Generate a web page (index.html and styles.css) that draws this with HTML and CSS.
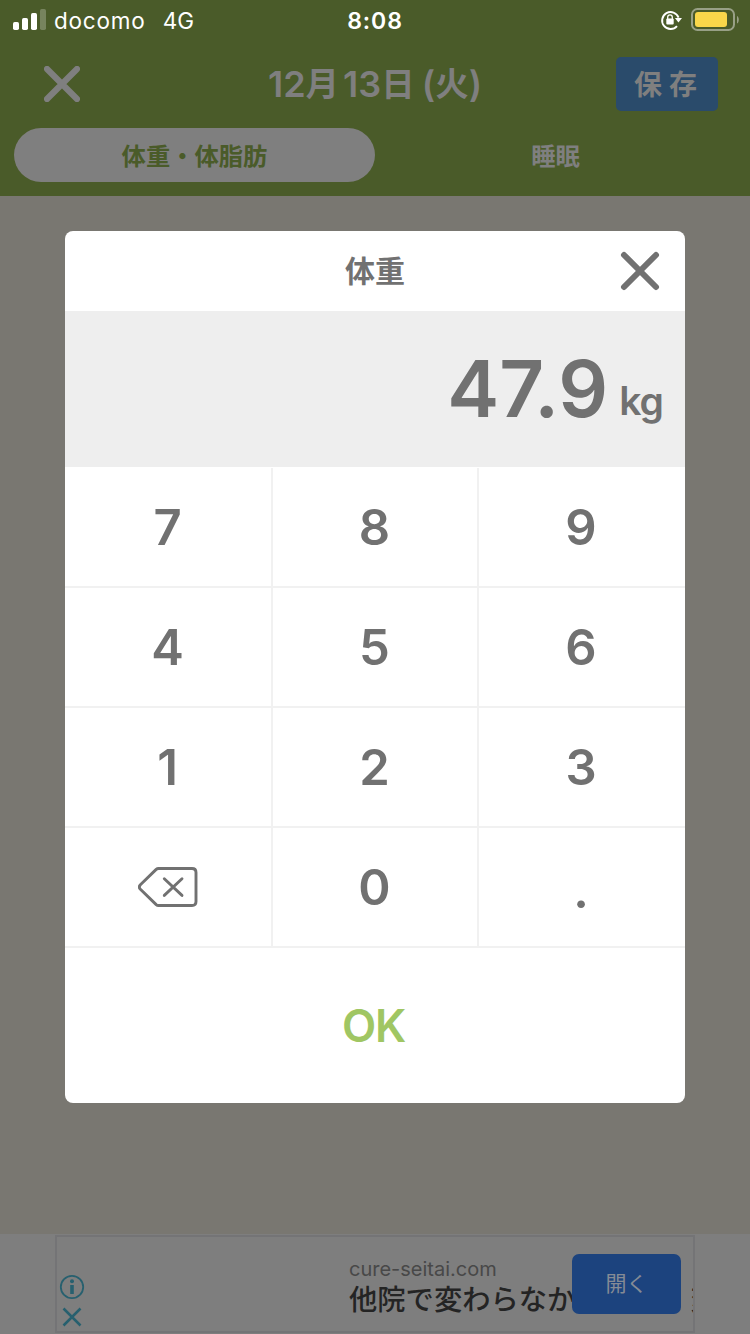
FILE: index.html
```html
<!DOCTYPE html>
<html lang="ja">
<head>
<meta charset="utf-8">
<title>体重</title>
<link rel="stylesheet" href="styles.css">
</head>
<body>
<div class="screen">
  <header class="header">
    <div class="status">
      <div class="status-left">
        <svg class="signal" width="34" height="22" viewBox="0 0 34 22"><g fill="#fff"><rect x="0" y="13" width="6" height="8" rx="1.7"/><rect x="9" y="9" width="6" height="12" rx="1.7"/><rect x="18" y="4" width="6" height="17" rx="1.7"/><rect x="27" y="0" width="6" height="21" rx="1.7" opacity=".25"/></g></svg>
        <span class="carrier">docomo</span>
        <span class="network">4G</span>
      </div>
      <div class="clock">8:08</div>
      <div class="status-right">
        <svg width="22" height="22" viewBox="0 0 22 22"><path d="M17 17.200A8.500 8.500 0 1 1 18.600 8.600" fill="none" stroke="#fff" stroke-width="1.900"/><path d="M14.900 9H22L18.450 13.500Z" fill="#fff"/><rect x="6.300" y="9.600" width="7.400" height="6" rx="1" fill="#fff"/><path d="M7.700 10V8.200a2.300 2.300 0 0 1 4.600 0V10" fill="none" stroke="#fff" stroke-width="1.300"/></svg>
        <svg width="49" height="24" viewBox="0 0 49 24"><rect x="1" y="1" width="42" height="21" rx="5.5" fill="none" stroke="#98a086" stroke-width="2"/><rect x="4" y="4" width="32" height="15" rx="3" fill="#f9d74a"/><path d="M46 8c2.400 1.200 2.400 6.400 0 7.600Z" fill="#98a086"/></svg>
      </div>
    </div>
    <div class="titlebar">
      <svg class="back" width="36" height="36" viewBox="0 0 36 36"><path d="M3 3 33 33M33 3 3 33" stroke="#7f7f7f" stroke-width="6.200" stroke-linecap="round"/></svg>
      <h1 class="date"><span>12</span><span class="kanji">月</span><span class="day">13</span><span class="kanji">日</span><span class="paren">(</span><span class="kanji">火</span><span>)</span></h1>
      <div class="save">保存</div>
    </div>
    <nav class="tabs">
      <div class="tab tab-active">体重・体脂肪</div>
      <div class="tab">睡眠</div>
    </nav>
  </header>
  <main class="content">
    <section class="modal">
      <div class="modal-head">
        <h2 class="modal-title">体重</h2>
        <svg class="close" width="40" height="40" viewBox="0 0 40 40"><path d="M4 4 36 36M36 4 4 36" stroke="#717171" stroke-width="6" stroke-linecap="round"/></svg>
      </div>
      <div class="display"><span class="value">47.9</span><span class="unit">kg</span></div>
      <div class="keypad">
        <div class="key">7</div><div class="key">8</div><div class="key">9</div>
        <div class="key">4</div><div class="key">5</div><div class="key">6</div>
        <div class="key">1</div><div class="key">2</div><div class="key">3</div>
        <div class="key erase"><svg width="60" height="40" viewBox="0 0 60 40"><g fill="none" stroke="#717171" stroke-width="2.900" stroke-linecap="round" stroke-linejoin="round"><path d="M20.500 1.500H54q4 0 4 4V34.500q0 4-4 4H20.500q-1.300 0-2.300-.9L2.400 22.300q-2.200-2.300 0-4.600L18.200 2.400q1-.9 2.300-.9Z"/><path d="M26.300 11.800 44 28.400M44 11.800 26.300 28.400"/></g></svg></div><div class="key">0</div><div class="key point">.</div>
      </div>
      <div class="ok">OK</div>
    </section>
  </main>
  <footer class="ad">
    <div class="ad-frame">
      <div class="ad-marks">
        <svg width="26" height="26" viewBox="0 0 26 26"><circle cx="13" cy="13" r="11.200" fill="none" stroke="#27606f" stroke-width="1.800"/><circle cx="13" cy="7.300" r="2" fill="#27606f"/><rect x="11.200" y="11" width="3.600" height="9" fill="#27606f"/></svg>
        <svg width="20" height="20" viewBox="0 0 20 20"><path d="M1.500 1.500 18.500 18.500M18.500 1.500 1.500 18.500" stroke="#27606f" stroke-width="2.500"/></svg>
      </div>
      <div class="ad-copy">
        <div class="ad-site">cure-seitai.com</div>
        <div class="ad-line"><span class="ad-title">他院で変わらなか</span><span class="ad-next">変</span></div>
      </div>
      <div class="ad-open">開く</div>
    </div>
  </footer>
</div>
</body>
</html>
```
FILE: styles.css
```css
* { box-sizing: border-box; }
body {
  margin: 0;
  font-family: Inter, "Noto Sans CJK JP", sans-serif;
}
svg { display: block; flex: none; }
h1, h2 { margin: 0; }
.screen {
  width: 750px;
  height: 1334px;
  display: flex;
  flex-direction: column;
  overflow: hidden;
  background: #797771;
}
.header { height: 196px; background: #4a5b29; }
.status {
  height: 40px;
  display: grid;
  grid-template-columns: 1fr auto 1fr;
  align-items: center;
  color: #fff;
  font-size: 22.5px;
  line-height: 42px;
}
.status-left { display: flex; align-items: center; padding-left: 13px; }
.signal { margin-top: -3px; }
.carrier { margin-left: 7px; letter-spacing: .8px; }
.network { margin-left: 17px; }
.clock { font-size: 23px; font-weight: 600; letter-spacing: .9px; }
.status-right {
  display: flex;
  align-items: center;
  justify-content: flex-end;
  gap: 9px;
  padding: 0 10px 2px 0;
}
.titlebar {
  height: 88px;
  display: grid;
  grid-template-columns: 1fr auto 1fr;
  align-items: center;
  padding: 0 32px 0 44px;
}
.date {
  display: flex;
  align-items: center;
  color: #7f7f7f;
  font-size: 36px;
  font-weight: 600;
  line-height: 50px;
  margin-left: -12px;
}
.kanji { font-size: 33.5px; }
.day { margin-left: 4px; }
.paren { margin-left: 7px; }
.save {
  justify-self: end;
  width: 102px;
  height: 54px;
  border-radius: 5px;
  background: #2a4b6b;
  color: #7f7f7f;
  font-size: 28px;
  font-weight: 600;
  line-height: 57px;
  letter-spacing: 7px;
  padding-left: 18px;
}
.tabs { display: flex; padding: 0 14px; }
.tab {
  flex: 1;
  height: 54px;
  border-radius: 27px;
  color: #7f7f7f;
  font-size: 24.3px;
  font-weight: 600;
  line-height: 56px;
  text-align: center;
}
.tab-active { background: #7f7f7f; color: #4a5b29; }
.content { height: 1038px; padding-top: 35px; }
.modal {
  width: 620px;
  height: 872px;
  margin: 0 auto;
  border-radius: 8px;
  overflow: hidden;
  background: #fff;
  color: #717171;
}
.modal-head {
  height: 80px;
  display: grid;
  grid-template-columns: 1fr auto 1fr;
  align-items: center;
  padding: 0 25px;
}
.modal-title { grid-column: 2; font-size: 30px; font-weight: 600; line-height: 80px; }
.close { justify-self: end; }
.display {
  height: 156px;
  display: flex;
  justify-content: flex-end;
  align-items: baseline;
  padding: 31px 22px 0 0;
  background: #eee;
  font-weight: 600;
}
.value { font-size: 78px; line-height: 94px; }
.unit { position: relative; top: -2px; font-size: 39px; letter-spacing: -1px; margin-left: 11px; }
.keypad {
  display: grid;
  grid-template-columns: 208px 206px 206px;
  grid-auto-rows: 120px;
  padding-top: 1px;
}
.key {
  display: flex;
  align-items: center;
  justify-content: center;
  border-right: 2px solid #f1f1f1;
  border-bottom: 2px solid #f1f1f1;
  padding-right: 1px;
  padding-top: 1px;
  font-size: 49px;
  font-weight: 600;
}
.key:nth-child(3n) { border-right: 0; padding-right: 2px; }
.erase { padding: 0; }
.point { padding-top: 6px; }
.ok {
  height: 155px;
  color: #a0c663;
  font-size: 44.5px;
  font-weight: 600;
  line-height: 156px;
  letter-spacing: -1.3px;
  text-align: center;
  padding-right: 3px;
}
.ad { height: 100px; padding: 1px 55px; background: #7e7e7e; }
.ad-frame {
  position: relative;
  width: 640px;
  height: 98px;
  display: flex;
  border: 2px solid #747476;
  overflow: hidden;
}
.ad-marks {
  flex: none;
  width: 292px;
  display: flex;
  flex-direction: column;
  align-items: flex-start;
  padding: 37px 0 0 2px;
  gap: 7px;
}
.ad-marks svg:last-child { margin-left: 3px; }
.ad-copy { flex: none; padding-top: 20px; }
.ad-site { color: #484848; font-size: 20px; line-height: 25px; }
.ad-line { display: flex; color: #242424; font-size: 28.3px; font-weight: 500; line-height: 37px; white-space: nowrap; }
.ad-next { margin-left: 115px; }
.ad-open {
  position: absolute;
  left: 515px;
  top: 17px;
  width: 109px;
  height: 60px;
  border-radius: 7px;
  background: #1c437e;
  color: #858b95;
  font-size: 21px;
  line-height: 60px;
  text-align: center;
}
```
